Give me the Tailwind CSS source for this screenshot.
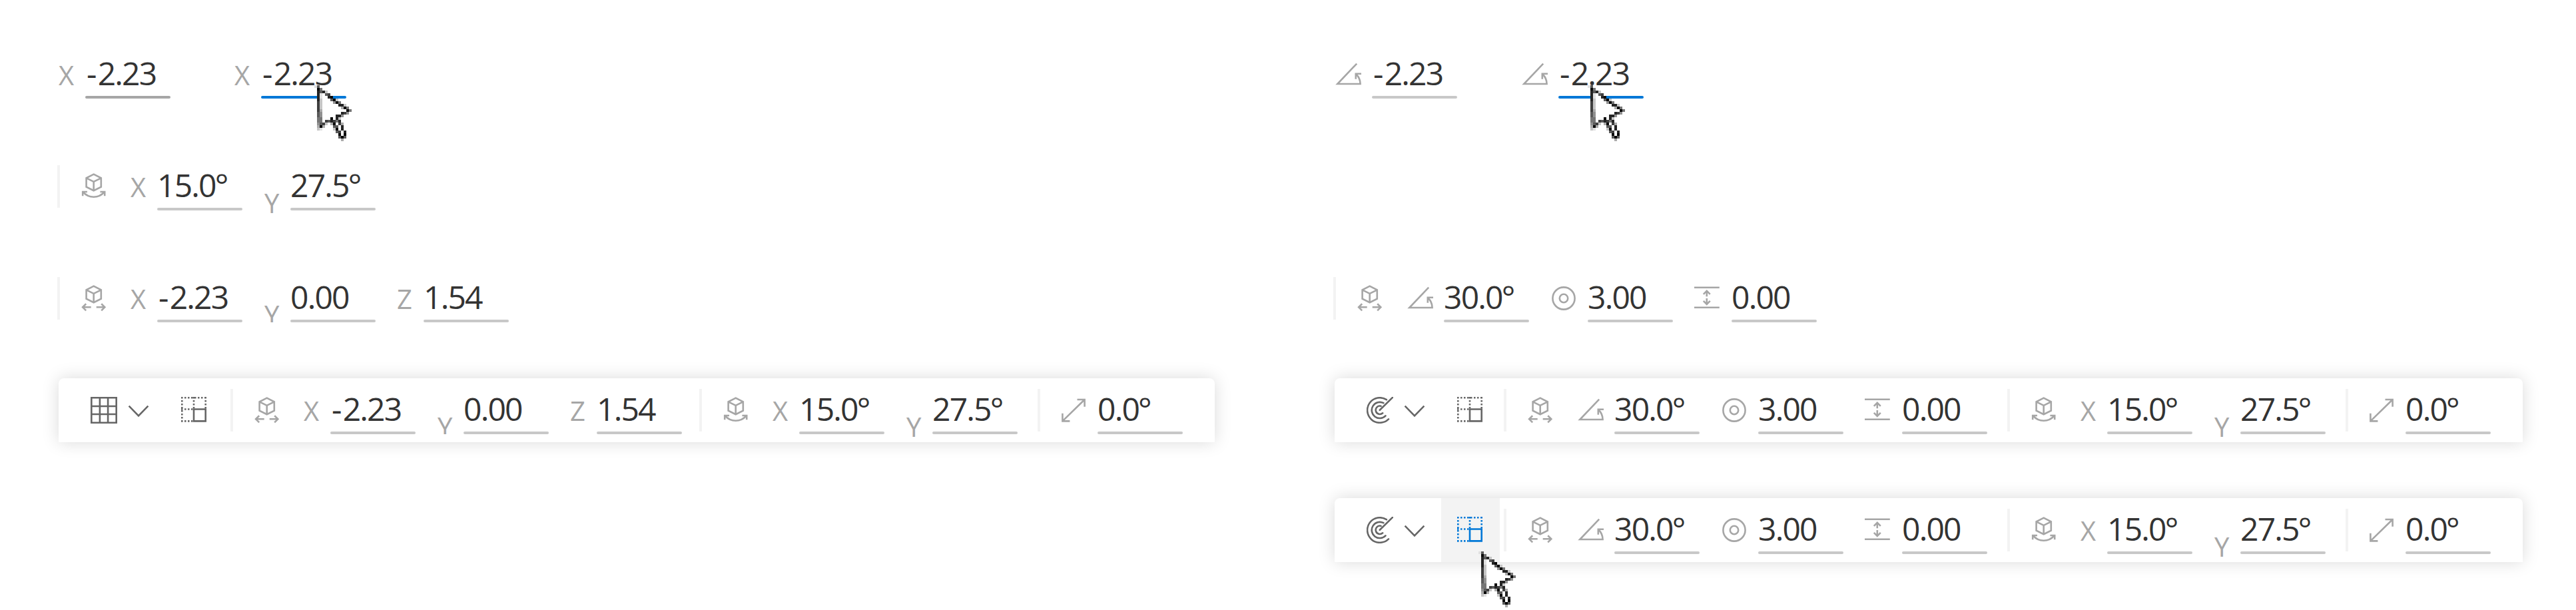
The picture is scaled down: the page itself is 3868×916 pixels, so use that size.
<!DOCTYPE html>
<html lang="en">
<head>
<meta charset="utf-8">
<title>Transform toolbar</title>
<script src="https://cdn.jsdelivr.net/npm/@tailwindcss/browser@4"></script>
</head>
<body class="bg-white font-['Open_Sans','Noto_Sans',sans-serif] text-[#333]">
<svg class="hidden" fill="none">
  <symbol id="grid" viewBox="0 0 40 40"><path d="M1.3 1.3H38.7V38.7H1.3ZM13.9 1.3V38.7M26.1 1.3V38.7M1.3 14H38.7M1.3 26H38.7"/></symbol>
  <symbol id="polar" viewBox="0 0 40 40"><path stroke-linecap="round" d="M29.9 4.2A18.75 18.75 0 1 0 33 33.4M25.4 9.2A12.1 12.1 0 1 0 28.5 28.4M21.5 13.8A6.2 6.2 0 1 0 24.2 24.3M19.8 19.8L39 .9"/></symbol>
  <symbol id="chevron" viewBox="0 0 40 40"><path d="M5.6 13.6L20 28.4L34.4 13.6"/></symbol>
  <symbol id="snap" viewBox="0 0 40 40"><path stroke-dasharray="2.5 2.5" d="M0 1.3H38M1.3 0V38M36.7 0V18M0 36.4H18M19 0V18M0 18.5H18"/><path d="M19 18.5H36.7V36.4H19Z"/></symbol>
  <symbol id="move" viewBox="0 0 40 40"><path d="M20.7 1.6L31.8 7.3V20.6L20.7 26.2L9.6 20.6V7.3ZM9.6 7.3L20.7 12.9L31.8 7.3M20.7 12.9V26.2M4 33.3H16.7M9.2 28.3L4.1 33.3L9.2 38.4M37.4 33.3H24.7M32.2 28.3L37.3 33.3L32.2 38.4"/></symbol>
  <symbol id="rotate" viewBox="0 0 40 40"><path d="M20.7 1.6L31.8 7.3V20.6L20.7 26.2L9.6 20.6V7.3ZM9.6 7.3L20.7 12.9L31.8 7.3M20.7 12.9V26.2M4.6 28.2Q11 35.8 20.7 35.8T36.8 28.2M11 28H4.2V34.2M30.4 28H37.2V34.2"/></symbol>
  <symbol id="angle" viewBox="0 0 40 40"><path d="M33.2 3.6L4.3 34H38.6Q38.4 25 32 19.3M40 18.7H31.8V26.8"/></symbol>
  <symbol id="ring" viewBox="0 0 40 40"><circle cx="20" cy="20" r="16.6"/><circle cx="20" cy="20" r="6.2"/></symbol>
  <symbol id="height" viewBox="0 0 40 40"><path d="M0 3.7H37.8M0 33.8H37.8M18.8 17.2V8.6M13.8 13.9L18.8 8.9L23.8 13.9M18.8 20V28.8M13.8 23.8L18.8 28.8L23.8 23.8"/></symbol>
  <symbol id="scale" viewBox="0 0 40 40"><path d="M3.4 36.4L36.6 4M25.5 4H36.6V14.7M14.4 36.4H3.4V24.7"/></symbol>
</svg>

<main class="flex h-[916px] w-[3868px] overflow-hidden">
  <section class="w-[1916px] ml-[88px] pt-20 flex flex-col items-start">
    <div class="flex gap-24" data-row="X:-2.23:dark X:-2.23:hot"></div>
    <div class="flex -ml-0.5 mt-[100px]" data-row="| rotate X:15.0° Y:27.5°"></div>
    <div class="flex -ml-0.5 mt-[100px]" data-row="| move X:-2.23 y:0.00 Z:1.54"></div>
    <div class="mt-[84px] flex h-24 w-[1736px] rounded-t-lg bg-white pt-4 shadow-[0_0_26px_rgba(0,0,0,0.15)]" data-row="grid snap gap4 | move X:-2.23 y:0.00 Z:1.54 gap26 | rotate X:15.0° Y:27.5° gap30 | scale:0.0°"></div>
  </section>
  <section class="pt-20 flex flex-col items-start">
    <div class="flex gap-24" data-row="angle:-2.23 angle:-2.23:hot"></div>
    <div class="flex -ml-0.5 mt-[268px]" data-row="| move angle:30.0° ring:3.00 height:0.00"></div>
    <div class="mt-[84px] flex h-24 w-[1784px] rounded-t-lg bg-white pt-4 shadow-[0_0_26px_rgba(0,0,0,0.15)]" data-row="polar snap | move angle:30.0° ring:3.00 height:0.00 gap30 | rotate X:15.0° Y:27.5° gap30 | scale:0.0°"></div>
    <div class="mt-[84px] flex h-24 w-[1784px] rounded-t-lg bg-white pt-4 shadow-[0_0_26px_rgba(0,0,0,0.15)]" data-row="polar snapOn | move angle:30.0° ring:3.00 height:0.00 gap30 | rotate X:15.0° Y:27.5° gap30 | scale:0.0°"></div>
  </section>
</main>
<div class="absolute left-[472px] top-[128px]" data-cursor></div>
<div class="absolute left-[2384px] top-[128px]" data-cursor></div>
<div class="absolute left-[2220px] top-[828px]" data-cursor></div>

<script>
const svg = (id, cls) => `<svg class="size-10 shrink-0 fill-none ${cls}"><use href="#${id}"/></svg>`;
const line = { dark: 'bg-[#a6a6a6]', hot: 'bg-[#0078d7]', base: 'bg-[#c8c8c8]' };

function field(label, value, state, first) {
  let l;
  if (label === 'X' || label === 'Z')
    l = `<span class="w-10 shrink-0 text-[40px] leading-[65px] text-[#a6a6a6]">${label}</span>`;
  else if (label === 'Y')
    l = `<span class="w-10 shrink-0 pt-6 pl-px text-[40px] leading-[65px] text-[#a6a6a6]">Y</span>`;
  else if (label === 'y')
    l = `<span class="mt-6 h-11 w-10 shrink-0 overflow-hidden pl-px text-[40px] leading-[65px] text-[#a6a6a6]">Y</span>`;
  else
    l = `<span class="mt-3 w-14 shrink-0">${svg(label, 'stroke-[#a6a6a6] stroke-[2.6px]')}</span>`;
  let v = value[0] === '-' ? `<span class="pl-[2px] pr-[3px]">-</span>${value.slice(1)}` : value;
  v = v.replace('°', '<span class="-ml-px">°</span>');
  return `<div class="flex h-[68px] ${first ? '' : 'ml-8'}">${l}<div class="flex w-32 flex-col"><span class="h-16 whitespace-nowrap text-[48px] leading-[59px] tracking-[-1.8px]">${v}</span><span class="h-1 w-32 rounded-full ${line[state || 'base']}"></span></div></div>`;
}

document.querySelectorAll('[data-row]').forEach(row => {
  let first = true, bare = row.classList.contains('gap-24'), out = '';
  for (const t of row.dataset.row.split(' ')) {
    const [a, v, s] = t.split(':');
    if (v) { out += field(a, v, s, first || bare); first = false; }
    else if (a === '|') { out += '<span class="h-16 w-1 shrink-0 bg-[#f3f3f3]"></span><span class="w-[30px] shrink-0"></span>'; first = true; }
    else if (a === 'gap4') out += '<span class="w-1 shrink-0"></span>';
    else if (a === 'gap26') out += '<span class="w-[26px] shrink-0"></span>';
    else if (a === 'gap30') out += '<span class="w-[30px] shrink-0"></span>';
    else if (a === 'grid' || a === 'polar') out += `<div class="mt-3 ml-12 flex w-28 shrink-0 gap-3">${svg(a, 'stroke-[#666] stroke-[2.6px]')}${svg('chevron', 'stroke-[#666] stroke-[2.6px]')}</div>`;
    else if (a === 'snap') out += `<div class="-mt-4 mr-1.5 h-24 w-[88px] shrink-0 pt-7 pl-6">${svg('snap', 'stroke-[#666] stroke-[2.6px]')}</div>`;
    else if (a === 'snapOn') out += `<div class="-mt-4 mr-1.5 h-24 w-[88px] shrink-0 bg-[#f3f3f3] pt-7 pl-6">${svg('snap', 'stroke-[#0078d7] stroke-[2.6px]')}</div>`;
    else out += `<div class="mt-3 mr-9 shrink-0">${svg(a, 'stroke-[#a6a6a6] stroke-[2.6px]')}</div>`;
  }
  row.innerHTML = out;
});

/* Arrow pointer: each digit is the darkness of one 4px cell, "w" is white, "." is clear. */
const px = [
  '16............',
  '.95...........',
  '.8682.........',
  '.81w67........',
  '.81ww89.......',
  '.82www692.....',
  '.72wwww495....',
  '.72wwwwww882..',
  '.72wwwwwww395.',
  '.73wwwwwwwww95',
  '.64wwwwwww874.',
  '.64wwwww884...',
  '.55www9w82....',
  '.55w768758....',
  '.4672.39w73...',
  '.393...66w8...',
  '.21....29w8...',
  '........67w8..',
  '.........9w9..',
  '.........696..',
  '..........3...'
];
const cells = px.map((r, y) => [...r].map((d, x) => d === '.' ? '' : `<rect x="${x}" y="${y}" width="1" height="1" fill="${d === 'w' ? '#fff' : `rgb(${Array(3).fill(Math.round(252 - d * 27)).join()})`}"/>`).join('')).join('');
document.querySelectorAll('[data-cursor]').forEach(e => {
  e.innerHTML = `<svg class="h-[84px] w-14" viewBox="0 0 14 21" shape-rendering="crispEdges">${cells}</svg>`;
});
</script>
</body>
</html>
